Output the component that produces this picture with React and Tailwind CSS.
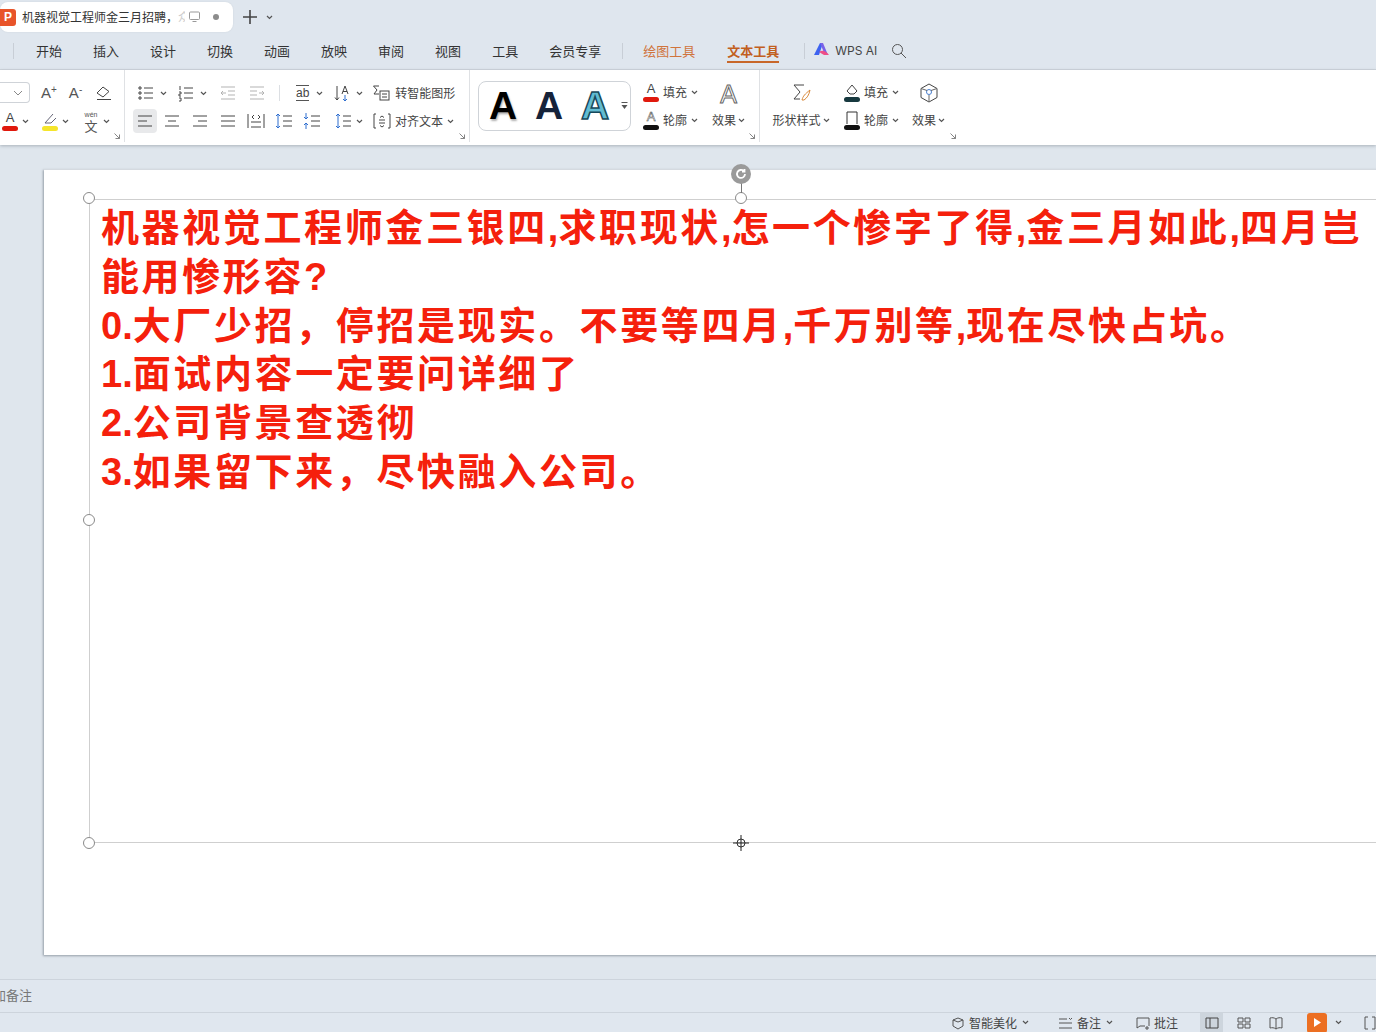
const FONT = "font-['Noto_Sans_CJK_SC','Noto_Sans',sans-serif]";

const Chevron = ({ className = '' }) => (
  <svg width="7" height="5" viewBox="0 0 7 5" className={`shrink-0 ${className}`} fill="none" stroke="#555" strokeWidth="1.2">
    <path d="M1 1l2.5 2.5L6 1" />
  </svg>
);

const Ic = ({ w = 20, h = 20, children, className = '' }) => (
  <svg width={w} height={h} viewBox={`0 0 ${w} ${h}`} fill="none" stroke="#444" strokeWidth="1" className={`shrink-0 ${className}`}>
    {children}
  </svg>
);

const CornerArrow = () => (
  <svg width="6" height="6" viewBox="0 0 6 6" fill="none" stroke="#777" strokeWidth="0.9">
    <path d="M0.5 0.5l5 5M1.5 5.5h4v-4" />
  </svg>
);

const Lines = ({ rows }) => (
  <Ic>
    {rows.map((r, i) => (
      <path key={i} d={r} />
    ))}
  </Ic>
);

const Slot = ({ w, children, className = '' }) => (
  <div className={`flex items-center justify-center shrink-0 ${className}`} style={{ width: w }}>
    {children}
  </div>
);

const ColorBar = ({ w = 16, color, children }) => (
  <div className="relative flex flex-col items-center w-[18px] h-[20px] shrink-0">
    <span className="text-[13px] leading-[14px] text-[#444] font-['Liberation_Sans',sans-serif]">{children}</span>
    <span className="absolute bottom-0 h-[5px] rounded-sm" style={{ width: w, background: color }} />
  </div>
);

function TabBar() {
  return (
    <div className="h-[32px] flex items-end shrink-0 bg-[#dfe6ee]">
      <div className="h-[30px] w-[233px] bg-white rounded-lg flex items-center relative shrink-0 shadow-[0_0_2px_rgba(0,0,0,0.08)]">
        <div className="w-[16px] h-[17px] bg-[#e8542a] rounded-r-[3px] text-white text-[12px] font-bold flex items-center justify-center font-['Liberation_Sans',sans-serif]">
          P
        </div>
        <span className="ml-[6px] text-[12px] text-[#333] whitespace-nowrap w-[163px] overflow-hidden">
          机器视觉工程师金三月招聘，<span className="text-[#ccc]">众</span>
        </span>
        <Ic w={14} h={14} className="absolute left-[188px] top-[8px]">
          <rect x="1.5" y="2" width="10" height="7.5" rx="1" stroke="#999" />
          <path d="M4.5 11.5h4" stroke="#999" />
        </Ic>
        <span className="absolute left-[213px] top-[12px] w-[6px] h-[6px] rounded-full bg-[#8c8c8c]" />
      </div>
      <div className="h-[30px] flex items-center ml-[9px]">
        <Ic w={16} h={16}>
          <path d="M8 1v14M1 8h14" stroke="#444" strokeWidth="1.6" />
        </Ic>
        <Chevron className="ml-[8px]" />
      </div>
    </div>
  );
}

function MenuBar() {
  const items = ['开始', '插入', '设计', '切换', '动画', '放映', '审阅', '视图', '工具', '会员专享'];
  return (
    <div className="h-[38px] flex items-center shrink-0 bg-[#dfe6ee] border-b border-[#cfd5dc] text-[13px] text-[#333] pl-[13px] whitespace-nowrap">
      <span className="w-px h-[16px] bg-[#c8ced6]" />
      <div className="flex gap-[31px] ml-[22px]">
        {items.map((t) => (
          <span key={t}>{t}</span>
        ))}
      </div>
      <span className="w-px h-[16px] bg-[#c8ced6] ml-[21px]" />
      <span className="ml-[20px] text-[#d0743c]">绘图工具</span>
      <div className="ml-[32px] relative font-bold text-[#c25f1e]">
        文本工具
        <span className="absolute left-0 right-0 -bottom-[3px] h-[2px] bg-[#c8672a]" />
      </div>
      <span className="w-px h-[16px] bg-[#c8ced6] ml-[25px]" />
      <svg width="16" height="13" viewBox="0 0 16 13" className="ml-[9px] -mt-[2px]">
        <path d="M0 12L6 0h3L5 12z" fill="#3d63f0" />
        <path d="M6 0h3l5 12h-3z" fill="#7a62e8" />
        <path d="M5 9c3-2 6-2 10 3h-5z" fill="#ee4e86" />
      </svg>
      <span className="ml-[5px] text-[12px] text-[#444] font-['Inter',sans-serif]">WPS AI</span>
      <Ic w={16} h={16} className="ml-[14px]">
        <circle cx="6.5" cy="6.5" r="5" stroke="#555" />
        <path d="M10 10l5 5" stroke="#555" />
      </Ic>
    </div>
  );
}

function FontGroup() {
  return (
    <div className="w-[125px] h-full border-r border-[#dfe1e4] relative shrink-0 flex flex-col pt-[12px] gap-[8px]">
      <div className="flex items-center h-[21px]">
        <div className="w-[30px] h-[21px] border border-[#cfd3d8] rounded-r-[4px] border-l-0 flex items-center justify-end pr-[6px] shrink-0">
          <svg width="10" height="6" viewBox="0 0 10 6" fill="none" stroke="#888">
            <path d="M1 1l4 4 4-4" />
          </svg>
        </div>
        <span className="ml-[11px] text-[15px] leading-none text-[#555] font-['Liberation_Sans',sans-serif]">
          A<sup className="text-[10px]">+</sup>
        </span>
        <span className="ml-[12px] text-[15px] leading-none text-[#555] font-['Liberation_Sans',sans-serif]">
          A<sup className="text-[10px]">-</sup>
        </span>
        <Ic w={18} h={16} className="ml-[13px]">
          <path d="M2 8l6-6 6 4.5-6 5.5z" stroke="#444" />
          <path d="M2 14.5h14" stroke="#444" />
        </Ic>
      </div>
      <div className="flex items-center h-[20px] mt-[0px]">
        <div className="ml-[1px]">
          <ColorBar color="#e0190d">A</ColorBar>
        </div>
        <Chevron className="ml-[3px]" />
        <div className="ml-[13px] relative w-[16px] h-[20px]">
          <Ic w={16} h={14}>
            <path d="M3 12l8-9M3 12l6 0 5-5" stroke="#667" />
          </Ic>
          <span className="absolute left-0 bottom-0 w-[16px] h-[5px] rounded-sm bg-[#f5e52b]" />
        </div>
        <Chevron className="ml-[4px]" />
        <div className="ml-[14px] w-[16px] flex flex-col items-center leading-none">
          <span className="text-[7px] h-[7px] text-[#555] font-['Liberation_Sans',sans-serif]">wén</span>
          <span className="text-[13px] text-[#555] mt-[1px]">文</span>
        </div>
        <Chevron className="ml-[4px]" />
      </div>
      <div className="absolute right-[4px] bottom-[3px]">
        <CornerArrow />
      </div>
    </div>
  );
}

function ParagraphGroup() {
  const list = (
    <Lines rows={['M8 5h9M8 10h9M8 15h9', 'M3 4h2v2H3zM3 9h2v2H3zM3 14h2v2H3z']} />
  );
  const numbered = <Lines rows={['M8 5h9M8 10h9M8 15h9', 'M4 3v4M3 9h2v2H3v2h2M3 15h2v3H3']} />;
  const alignActive = <Lines rows={['M3 5h14M3 10h9M3 15h14']} />;
  const blue = '#2f6fd0';
  return (
    <div className="w-[345px] h-full border-r border-[#dfe1e4] relative shrink-0 flex flex-col pt-[13px] pl-[8px] text-[12px] text-[#444]">
      <div className="flex items-center h-[20px]">
        <Slot w={26}>{list}</Slot>
        <Chevron className="ml-[1px]" />
        <Slot w={26} className="ml-[6px]">{numbered}</Slot>
        <Chevron className="ml-[1px]" />
        <Slot w={24} className="ml-[9px] opacity-40">
          <Lines rows={['M3 4h14M10 8h7M10 12h7M3 16h14', 'M8 10H3M5 8l-2 2 2 2']} />
        </Slot>
        <Slot w={28} className="ml-[3px] opacity-40">
          <Lines rows={['M3 4h14M3 8h7M3 12h7M3 16h14', 'M12 10h5M15 8l2 2-2 2']} />
        </Slot>
        <span className="w-px h-[16px] bg-[#dcdfe3] ml-[8px]" />
        <span className="ml-[16px] text-[12px] leading-[14px] text-[#444] border-t border-b border-[#555] font-['Liberation_Sans',sans-serif]">ab</span>
        <Chevron className="ml-[7px]" />
        <Slot w={20} className="ml-[10px]">
          <Ic>
            <path d="M4 3v14M2 14.5L4 17l2-2.5" />
            <path d="M9 11l3-8 3 8M10 8.5h4" />
            <path d="M12 12v6M10 16l2 2 2-2" stroke={blue} />
          </Ic>
        </Slot>
        <Chevron className="ml-[3px]" />
        <Slot w={20} className="ml-[9px]">
          <Ic>
            <path d="M7 3H1.5L5 7 2 11h5" />
            <rect x="8" y="8" width="9" height="9" />
            <path d="M10 11h5M10 14h5" />
          </Ic>
        </Slot>
        <span className="ml-[3px] whitespace-nowrap">转智能图形</span>
      </div>
      <div className="flex items-center h-[24px] mt-[6px]">
        <Slot w={24} className="h-[24px] rounded bg-[#e8e9eb]">{alignActive}</Slot>
        <Slot w={28} className="ml-[1px]"><Lines rows={['M3 5h14M6 10h8M3 15h14']} /></Slot>
        <Slot w={28}><Lines rows={['M3 5h14M8 10h9M3 15h14']} /></Slot>
        <Slot w={28}><Lines rows={['M3 5h14M3 10h14M3 15h14']} /></Slot>
        <Slot w={28}>
          <Lines rows={['M2 3v14M18 3v14M5 11h10M5 16h10', 'M8 4L6 6l2 2M12 4l2 2-2 2']} />
        </Slot>
        <Slot w={28}>
          <Ic>
            <path d="M9 5h9M9 10h9M9 15h9" />
            <path d="M4 3v14M2 5l2-2 2 2M2 15l2 2 2-2" stroke={blue} />
          </Ic>
        </Slot>
        <Slot w={28}>
          <Ic>
            <path d="M9 5h9M9 10h9M9 15h9" />
            <path d="M4 2v6M2 6l2 2 2-2M4 12v6M2 14l2-2 2 2" stroke={blue} />
          </Ic>
        </Slot>
        <Slot w={28} className="ml-[3px]">
          <Ic>
            <path d="M10 5h8M10 10h8M10 15h8" />
            <path d="M5 3v14M3 5l2-2 2 2M3 15l2 2 2-2" stroke={blue} />
          </Ic>
        </Slot>
        <Chevron className="-ml-[1px]" />
        <Slot w={20} className="ml-[9px]">
          <Ic>
            <path d="M4 3H2v14h2M16 3h2v14h-2M7 9h6M7 12h6M8 6.5l2-1.5 2 1.5M8 14.5l2 1.5 2-1.5" />
          </Ic>
        </Slot>
        <span className="ml-[3px] whitespace-nowrap">对齐文本</span>
        <Chevron className="ml-[4px]" />
      </div>
      <div className="absolute right-[4px] bottom-[3px]">
        <CornerArrow />
      </div>
    </div>
  );
}

function TextStyleGroup() {
  return (
    <div className="w-[290px] h-full border-r border-[#dfe1e4] relative shrink-0 flex items-start pt-[11px] pl-[8px] text-[12px] text-[#444]">
      <div className="w-[153px] h-[50px] border border-[#cfd3d8] rounded-lg flex items-center font-['Liberation_Sans',sans-serif] font-bold text-[39px] leading-none relative shrink-0">
        <span className="absolute left-[10px] top-[4px] text-black [text-shadow:1px_2px_2px_rgba(0,0,0,0.3)]">A</span>
        <span className="absolute left-[56px] top-[4px] text-[#16233a]">A</span>
        <span className="absolute left-[102px] top-[4px] text-[#62bcd2] [-webkit-text-stroke:1.5px_#17485a]">A</span>
        <svg width="7" height="8" viewBox="0 0 7 8" className="absolute right-[2px] top-[20px]" fill="#555">
          <path d="M0.5 0h6v1h-6zM0.5 3h6L3.5 7z" />
        </svg>
      </div>
      <div className="ml-[11px] flex flex-col gap-[8px] pt-[1px]">
        <div className="flex items-center h-[20px]">
          <ColorBar color="#e0190d">A</ColorBar>
          <span className="ml-[3px]">填充</span>
          <Chevron className="ml-[4px]" />
        </div>
        <div className="flex items-center h-[20px]">
          <ColorBar color="#111">
            <span className="[-webkit-text-stroke:0.5px_#444] text-white">A</span>
          </ColorBar>
          <span className="ml-[3px]">轮廓</span>
          <Chevron className="ml-[4px]" />
        </div>
      </div>
      <div className="ml-[14px] flex flex-col items-center gap-[4px] pt-[1px]">
        <span className="text-[25px] leading-[24px] text-white [-webkit-text-stroke:1px_#666] font-['Liberation_Sans',sans-serif]">A</span>
        <div className="flex items-center mt-[1px]">
          <span>效果</span>
          <Chevron className="ml-[2px]" />
        </div>
      </div>
      <div className="absolute right-[4px] bottom-[3px]">
        <CornerArrow />
      </div>
    </div>
  );
}

function ShapeGroup() {
  return (
    <div className="w-[200px] h-full relative shrink-0 flex items-start pt-[12px] pl-[10px] text-[12px] text-[#444]">
      <div className="flex flex-col items-center w-[62px] gap-[7px]">
        <Ic w={22} h={22}>
          <path d="M14 3H4l6 7-6 7h6" stroke="#444" />
          <path d="M12 18c1-4 3-6 8-10-1 5-3 8-6 10z" stroke="#d98a3d" />
        </Ic>
        <div className="flex items-center">
          <span className="whitespace-nowrap">形状样式</span>
          <Chevron className="ml-[2px]" />
        </div>
      </div>
      <div className="ml-[12px] flex flex-col gap-[8px]">
        <div className="flex items-center h-[20px]">
          <div className="relative w-[16px] h-[20px]">
            <Ic w={16} h={15}>
              <path d="M3 9l5-6 5 6-3 3H6z" />
            </Ic>
            <span className="absolute bottom-0 left-0 w-[16px] h-[5px] rounded-sm bg-[#17393f]" />
          </div>
          <span className="ml-[4px]">填充</span>
          <Chevron className="ml-[4px]" />
        </div>
        <div className="flex items-center h-[20px]">
          <div className="relative w-[16px] h-[20px]">
            <Ic w={16} h={15}>
              <path d="M3 14V2h10v12" stroke="#333" />
            </Ic>
            <span className="absolute bottom-0 left-0 w-[16px] h-[5px] rounded-sm bg-[#111]" />
          </div>
          <span className="ml-[4px]">轮廓</span>
          <Chevron className="ml-[4px]" />
        </div>
      </div>
      <div className="ml-[13px] flex flex-col items-center gap-[7px]">
        <Ic w={22} h={22}>
          <path d="M11 2l8 4.5v9L11 20l-8-4.5v-9z" stroke="#444" />
          <circle cx="11" cy="10" r="2.5" stroke="#4a7fd0" />
          <path d="M11 13v7M3 6.5l6 2M19 6.5l-6 2" stroke="#666" />
        </Ic>
        <div className="flex items-center">
          <span>效果</span>
          <Chevron className="ml-[2px]" />
        </div>
      </div>
      <div className="absolute left-[190px] bottom-[3px]">
        <CornerArrow />
      </div>
    </div>
  );
}

const Handle = ({ className }) => (
  <span className={`absolute w-[12px] h-[12px] rounded-full bg-white border border-[#8a8a8a] ${className}`} />
);

// latin runs in the slide text carry no extra spacing, only the CJK does
const SlideLine = ({ text }) => (
  <div>
    {text.split(/([\x00-\x7f]+)/).map((seg, i) => (
      <span key={i} className={/^[\x00-\x7f]+$/.test(seg) ? 'tracking-normal' : 'tracking-[2.62px]'}>
        {seg}
      </span>
    ))}
  </div>
);

function Slide() {
  const lines = [
    '机器视觉工程师金三银四,求职现状,怎一个惨字了得,金三月如此,四月岂',
    '能用惨形容?',
    '0.大厂少招，停招是现实。不要等四月,千万别等,现在尽快占坑。',
    '1.面试内容一定要问详细了',
    '2.公司背景查透彻',
    '3.如果留下来，尽快融入公司。',
  ];
  return (
    <div className="relative w-[1400px] h-[786px] bg-white shadow-[-1px_1px_2px_rgba(120,130,140,0.7)] border-t border-[#d5dae0] shrink-0">
      {/* text box sits on the slide canvas */}
      <div className="absolute left-[45px] top-[29px] w-[1340px] h-[644px] border-l border-t border-b border-[#cfcfcf] pl-[11px] pt-[4px]">
        <div className="font-['Liberation_Sans','Noto_Sans_CJK_SC',sans-serif] font-bold text-[38px] leading-[48.8px] text-[#f5200c] whitespace-nowrap">
          {lines.map((l) => (
            <SlideLine key={l} text={l} />
          ))}
        </div>
      </div>
      <Handle className="left-[39px] top-[22px]" />
      <Handle className="left-[39px] top-[344px]" />
      <Handle className="left-[39px] top-[667px]" />
      <Handle className="left-[691px] top-[22px]" />
      <span className="absolute left-[697px] top-[11px] w-px h-[12px] bg-[#777]" />
      <span className="absolute left-[687px] -top-[6px] w-[20px] h-[20px] rounded-full bg-[#9a9a9a] flex items-center justify-center">
        <svg width="12" height="12" viewBox="0 0 12 12" fill="none" stroke="#fff" strokeWidth="1.8">
          <path d="M10 6a4 4 0 1 1-1.3-3M9.5 1v2.5H7" />
        </svg>
      </span>
      <svg width="18" height="18" viewBox="0 0 18 18" fill="none" className="absolute left-[688px] top-[664px]">
        <circle cx="9" cy="9" r="4" stroke="#333" />
        <path d="M9 1v16M1 9h16" stroke="#222" />
      </svg>
    </div>
  );
}

function StatusBar() {
  return (
    <div className="h-[20px] flex items-center shrink-0 border-t border-[#cdd4dc] bg-[#e0e7ef] text-[12px] text-[#444] pl-[950px] whitespace-nowrap overflow-hidden">
      <Ic w={16} h={16}>
        <path d="M8 3l5 2v6l-5 3-5-3V5zM3 5l5 2 5-2" stroke="#555" />
      </Ic>
      <span className="ml-[3px]">智能美化</span>
      <Chevron className="ml-[5px]" />
      <span className="w-px h-[14px] bg-[#c8ced6] ml-[14px]" />
      <Ic w={16} h={14} className="ml-[15px]">
        <path d="M1 3h8M1 7h13M1 12h13M11 2l1.5 1.5L14 2" stroke="#555" />
      </Ic>
      <span className="ml-[3px]">备注</span>
      <Chevron className="ml-[5px]" />
      <Ic w={16} h={16} className="ml-[22px]">
        <path d="M2 13V3h12v8M2 13l3-2h5M12 11v4M10 13h4" stroke="#555" />
      </Ic>
      <span className="ml-[3px]">批注</span>
      <span className="w-px h-[14px] bg-[#c8ced6] ml-[13px]" />
      <div className="ml-[9px] w-[23px] h-[20px] bg-[#cdd5dd] flex items-center justify-center shrink-0">
        <Ic w={14} h={12}>
          <path d="M1 1h12v10H1zM5 1v10" stroke="#444" />
        </Ic>
      </div>
      <Ic w={16} h={14} className="ml-[13px]">
        <path d="M2 2h5v4H2zM9 2h5v4H9zM2 8h5v4H2zM9 8h5v4H9z" stroke="#555" />
      </Ic>
      <Ic w={16} h={14} className="ml-[16px]">
        <path d="M8 3C6 1.5 4 1.5 2 2v10c2-.5 4-.5 6 1 2-1.5 4-1.5 6-1V2c-2-.5-4-.5-6 1zM8 3v10" stroke="#555" />
      </Ic>
      <span className="w-px h-[14px] bg-[#c8ced6] ml-[12px]" />
      <div className="ml-[11px] w-[20px] h-[20px] rounded-[3px] bg-[#ec6f22] flex items-center justify-center shrink-0">
        <svg width="8" height="9" viewBox="0 0 8 9" fill="#fff">
          <path d="M1 0l7 4.5L1 9z" />
        </svg>
      </div>
      <Chevron className="ml-[8px]" />
      <span className="w-px h-[14px] bg-[#c8ced6] ml-[12px]" />
      <Ic w={14} h={14} className="ml-[9px]">
        <path d="M5 1H2v12h3M9 1h3v12H9" stroke="#555" />
      </Ic>
    </div>
  );
}

export default function App() {
  return (
    <div className={`w-[1376px] h-[1032px] overflow-hidden flex flex-col bg-[#e0e7ef] ${FONT}`}>
      <TabBar />
      <MenuBar />
      <div className="h-[75px] flex bg-white shrink-0 shadow-[0_1px_3px_rgba(120,130,140,0.5)] relative z-10 pb-[3px]">
        <FontGroup />
        <ParagraphGroup />
        <TextStyleGroup />
        <ShapeGroup />
      </div>
      <div className="flex-1 overflow-hidden pt-[24px] pl-[44px] bg-[#dfe6ed] flex items-start">
        <Slide />
      </div>
      <div className="h-[33px] shrink-0 border-t border-[#cdd4dc] flex items-center text-[13px] text-[#777] overflow-hidden pb-[3px]">
        <span className="-ml-[7px]">加备注</span>
      </div>
      <StatusBar />
    </div>
  );
}
